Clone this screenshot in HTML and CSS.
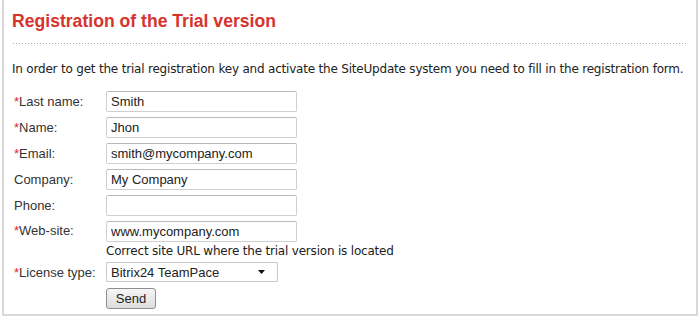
FILE: index.html
```html
<!DOCTYPE html>
<html lang="en">

<head>
    <meta charset="UTF-8">
    <title>Registration of the Trial version</title>
    <link rel="stylesheet" href="styles.css">
</head>

<body>

    <div class="frame">
        <h1 class="title">Registration of the Trial version</h1>
        <div class="dots"></div>

        <p class="intro">In order to get the trial registration key and activate the SiteUpdate system you need to fill in the registration form.</p>

        <form class="reg-form">
            <div class="row">
                <label class="label"><span class="star">*</span>Last name:</label>
                <input type="text" class="field" value="Smith">
            </div>
            <div class="row">
                <label class="label"><span class="star">*</span>Name:</label>
                <input type="text" class="field" value="Jhon">
            </div>
            <div class="row">
                <label class="label"><span class="star">*</span>Email:</label>
                <input type="text" class="field" value="smith@mycompany.com">
            </div>
            <div class="row">
                <label class="label">Company:</label>
                <input type="text" class="field" value="My Company">
            </div>
            <div class="row">
                <label class="label">Phone:</label>
                <input type="text" class="field" value="">
            </div>
            <div class="row row-top">
                <label class="label"><span class="star">*</span>Web-site:</label>
                <div class="col">
                    <input type="text" class="field" value="www.mycompany.com">
                    <div class="hint">Correct site URL where the trial version is located</div>
                </div>
            </div>
            <div class="row row-select">
                <label class="label"><span class="star">*</span>License type:</label>
                <div class="select">
                    <span>Bitrix24 TeamPace</span>
                    <svg width="7" height="4" viewBox="0 0 7 4"><path d="M0 0h7L3.5 4z" fill="#111"/></svg>
                </div>
            </div>
            <div class="row row-btn">
                <span class="label"></span>
                <button type="button" class="send">Send</button>
            </div>
        </form>
    </div>

</body>

</html>
```

FILE: styles.css
```css
body {
    margin: 0;
    padding: 0;
    background-color: #fff;
    font-family: "DejaVu Sans", Tahoma, sans-serif;
    color: #222;
}

.frame {
    margin: 0 2px;
    height: 314px;
    border: 2px solid #d9d9d9;
    border-top: none;
    padding: 0 8px 0 8px;
}

.title {
    margin: 0;
    padding-top: 10px;
    font-family: "Liberation Sans", Arial, sans-serif;
    font-size: 17.6px;
    line-height: 22px;
    font-weight: bold;
    color: #d6332f;
}

.dots {
    height: 1px;
    margin: 11px 0 0 1px;
    background: repeating-linear-gradient(to right, #a9a9a9 0, #a9a9a9 1px, transparent 1px, transparent 3px);
}

.intro {
    margin: 17px 0 0 0;
    font-size: 12px;
    line-height: 16px;
    letter-spacing: -0.2px;
}

.reg-form {
    margin-top: 14px;
    padding-left: 2px;
    font-family: "Liberation Sans", Arial, sans-serif;
    font-size: 13px;
}

.row {
    display: flex;
    align-items: center;
    height: 20px;
    margin-bottom: 6px;
}

.row-top {
    align-items: flex-start;
    height: auto;
    margin-bottom: 3px;
}

.row-top .label {
    line-height: 20px;
}

.label {
    width: 92px;
    flex-shrink: 0;
    color: #333;
}

.star {
    color: #e0272b;
}

.field {
    box-sizing: border-box;
    width: 191px;
    height: 21px;
    margin: 0;
    padding: 0 4px;
    border: 1px solid #cfcfcf;
    border-top-color: #b9b9b9;
    border-radius: 2px;
    font-family: "Liberation Sans", Arial, sans-serif;
    font-size: 13px;
    color: #222;
    outline: none;
}

.hint {
    margin-top: 1px;
    font-family: "DejaVu Sans", Tahoma, sans-serif;
    font-size: 12px;
    line-height: 16px;
    letter-spacing: -0.2px;
}

.select {
    box-sizing: border-box;
    width: 172px;
    height: 20px;
    display: flex;
    align-items: center;
    justify-content: space-between;
    padding: 0 12px 0 4px;
    border: 1px solid #c9c9c9;
    background-color: #fff;
}

.row-btn {
    height: 21px;
    margin-top: 1px;
    margin-bottom: 0;
}

.send {
    box-sizing: border-box;
    width: 50px;
    height: 21px;
    padding: 0;
    border: 1px solid #8e8e8e;
    border-radius: 3px;
    background: linear-gradient(#f6f6f6, #dddddd);
    font-family: "Liberation Sans", Arial, sans-serif;
    font-size: 13px;
    color: #222;
}
```
